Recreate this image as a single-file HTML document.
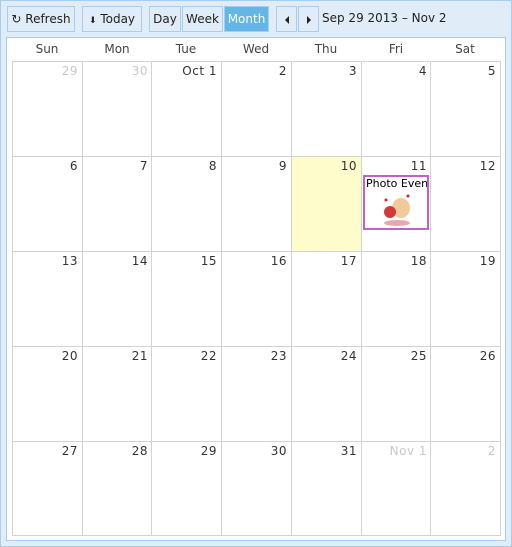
<!DOCTYPE html><html><head><style>
*{margin:0;padding:0;box-sizing:border-box}
body{width:512px;height:547px;overflow:hidden;font-family:"DejaVu Sans","Liberation Sans",sans-serif;font-size:12px;color:#222}
.o{position:absolute;left:0;top:0;width:512px;height:547px;background:#e0ecf8;border:1px solid #a9cdee}
.b{position:absolute;top:6px;height:26px;border:1px solid #a9cdee;background:#e0ecf8;line-height:24px;text-align:center;font-size:12px;color:#222}
.p{position:absolute;left:6px;top:37px;width:500px;height:504px;background:#fff;border:1px solid #a9cdee}
.h{position:absolute;top:42px;width:70px;text-align:center;font-size:12px;color:#444}
.v{position:absolute;top:61px;width:1px;height:475px;background:#d3d3d3}
.r{position:absolute;left:12px;width:489px;height:1px;background:#d3d3d3}
.n{position:absolute;width:66px;text-align:right;font-size:12px;color:#333;letter-spacing:0.5px}
.g{color:#c8c8c8}
</style></head><body><div class="o"></div>
<div class="b" style="left:7px;width:68px">↻ Refresh</div>
<div class="b" style="left:82px;width:60px"><span style="font-size:9px">⬇</span> Today</div>
<div class="b" style="left:149px;width:32px">Day</div>
<div class="b" style="left:182px;width:41px">Week</div>
<div class="b" style="left:224px;width:45px;background:#62b7e8;color:#fff">Month</div>
<div class="b" style="left:276px;width:21px"><svg width="6" height="8" style="vertical-align:-1px"><path d="M5 0L1 4L5 8Z" fill="#222"/></svg></div>
<div class="b" style="left:298px;width:21px"><svg width="6" height="8" style="vertical-align:-1px"><path d="M1 0L5 4L1 8Z" fill="#222"/></svg></div>
<div style="position:absolute;left:322px;top:11px;font-size:12px">Sep 29 2013 – Nov 2</div>
<div class="p"></div>
<div class="h" style="left:12px">Sun</div><div class="h" style="left:82px">Mon</div><div class="h" style="left:151px">Tue</div><div class="h" style="left:221px">Wed</div><div class="h" style="left:291px">Thu</div><div class="h" style="left:361px">Fri</div><div class="h" style="left:430px">Sat</div>
<div style="position:absolute;left:292px;top:157px;width:69px;height:94px;background:#fffccc"></div>
<div class="v" style="left:12px"></div><div class="v" style="left:82px"></div><div class="v" style="left:151px"></div><div class="v" style="left:221px"></div><div class="v" style="left:291px"></div><div class="v" style="left:361px"></div><div class="v" style="left:430px"></div><div class="v" style="left:500px"></div>
<div class="r" style="top:61px"></div><div class="r" style="top:156px"></div><div class="r" style="top:251px"></div><div class="r" style="top:346px"></div><div class="r" style="top:441px"></div><div class="r" style="top:535px"></div>
<div class="n g" style="left:12px;top:64px">29</div><div class="n g" style="left:82px;top:64px">30</div><div class="n" style="left:151px;top:64px">Oct 1</div><div class="n" style="left:221px;top:64px">2</div><div class="n" style="left:291px;top:64px">3</div><div class="n" style="left:361px;top:64px">4</div><div class="n" style="left:430px;top:64px">5</div>
<div class="n" style="left:12px;top:159px">6</div><div class="n" style="left:82px;top:159px">7</div><div class="n" style="left:151px;top:159px">8</div><div class="n" style="left:221px;top:159px">9</div><div class="n" style="left:291px;top:159px">10</div><div class="n" style="left:361px;top:159px">11</div><div class="n" style="left:430px;top:159px">12</div>
<div class="n" style="left:12px;top:254px">13</div><div class="n" style="left:82px;top:254px">14</div><div class="n" style="left:151px;top:254px">15</div><div class="n" style="left:221px;top:254px">16</div><div class="n" style="left:291px;top:254px">17</div><div class="n" style="left:361px;top:254px">18</div><div class="n" style="left:430px;top:254px">19</div>
<div class="n" style="left:12px;top:349px">20</div><div class="n" style="left:82px;top:349px">21</div><div class="n" style="left:151px;top:349px">22</div><div class="n" style="left:221px;top:349px">23</div><div class="n" style="left:291px;top:349px">24</div><div class="n" style="left:361px;top:349px">25</div><div class="n" style="left:430px;top:349px">26</div>
<div class="n" style="left:12px;top:444px">27</div><div class="n" style="left:82px;top:444px">28</div><div class="n" style="left:151px;top:444px">29</div><div class="n" style="left:221px;top:444px">30</div><div class="n" style="left:291px;top:444px">31</div><div class="n g" style="left:361px;top:444px">Nov 1</div><div class="n g" style="left:430px;top:444px">2</div>
<div style="position:absolute;left:363px;top:175px;width:66px;height:55px;border:2px solid #c55fc9;background:#fff;overflow:hidden;white-space:nowrap;font-size:11px;padding-left:1px;color:#000">Photo Event
<svg style="position:absolute;left:12px;top:15px" width="40" height="36"><ellipse cx="24" cy="16" rx="9" ry="10" fill="#f2c99a"/><circle cx="13" cy="20" r="6" fill="#d23a3a"/><ellipse cx="20" cy="31" rx="13" ry="3" fill="#e7a8b0"/><circle cx="9" cy="8" r="1.5" fill="#d22"/><circle cx="31" cy="4" r="1.5" fill="#d22"/></svg></div>
</body></html>
